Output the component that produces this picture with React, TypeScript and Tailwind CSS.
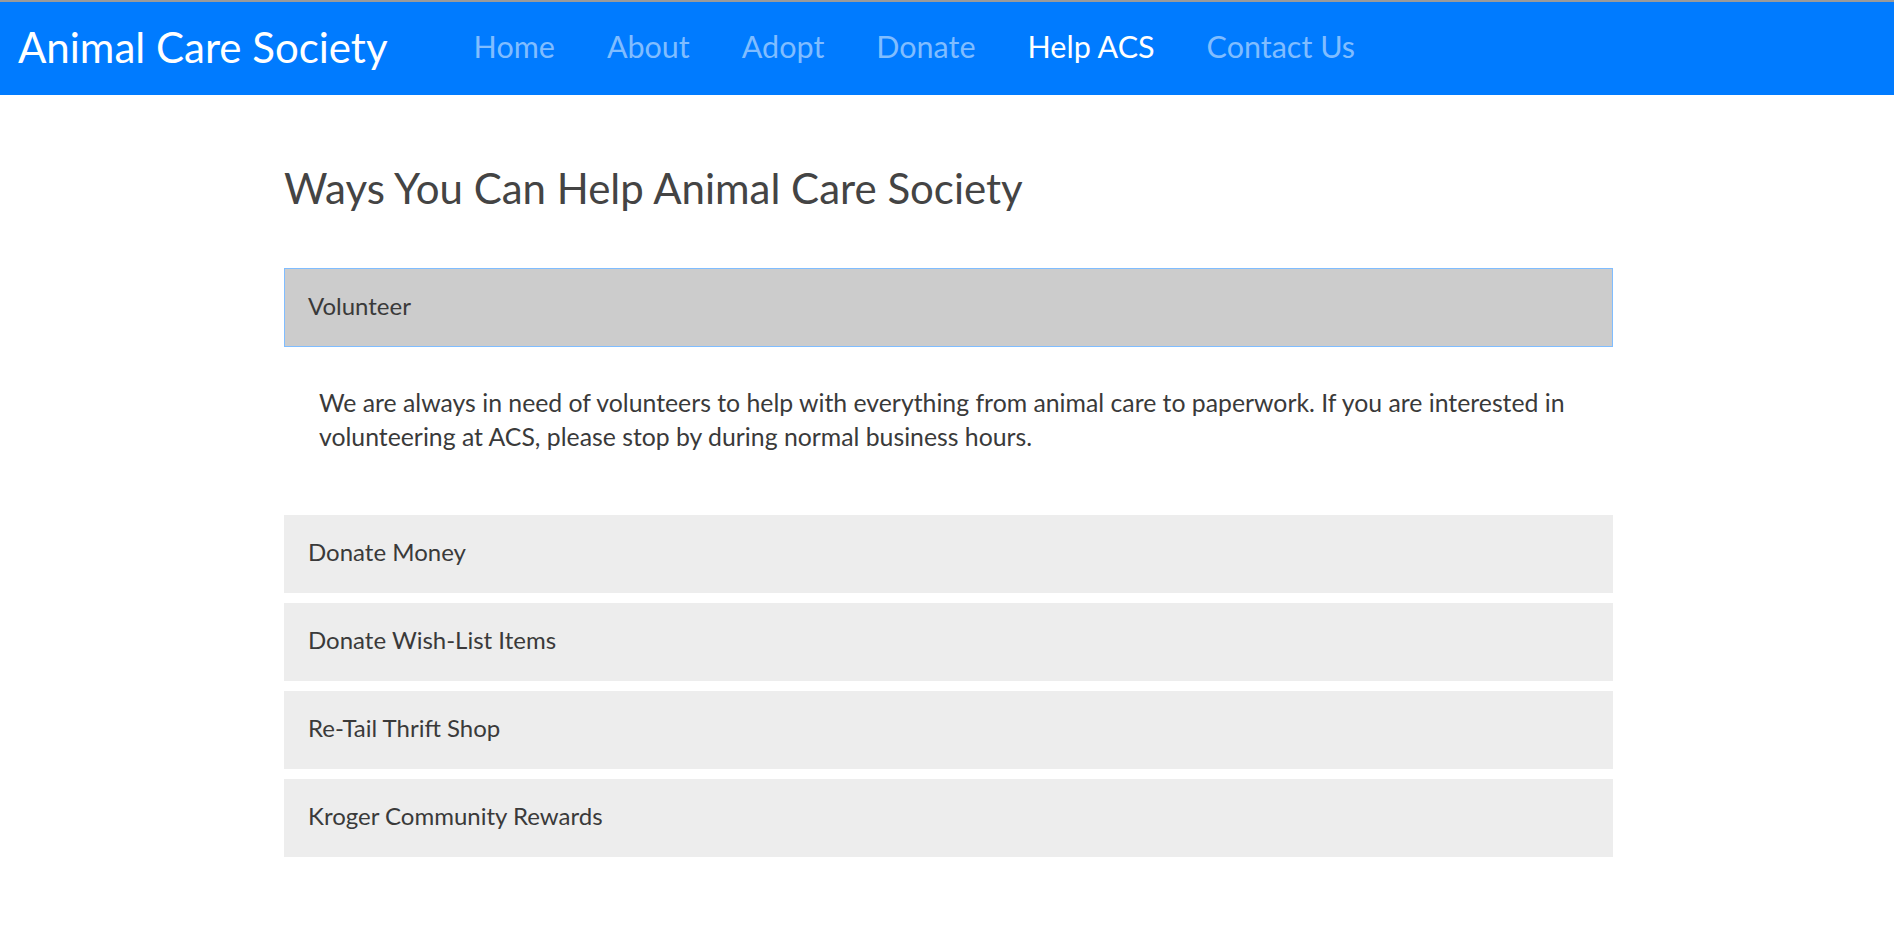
const links = ['Home', 'About', 'Adopt', 'Donate', 'Help ACS', 'Contact Us'];

const ways = ['Donate Money', 'Donate Wish-List Items', 'Re-Tail Thrift Shop', 'Kroger Community Rewards'];

export default function App() {
  return (
    <div className="min-h-screen bg-white font-['Lato',sans-serif] text-[#3a3a3a]">
      <nav className="flex h-[95px] items-center border-t-2 border-[#9a9a9a] bg-[#007bff] px-[18px] pb-[3px]">
        <span className="text-[42px] text-white">Animal Care Society</span>
        <ul className="ml-[60px] flex">
          {links.map((link) => (
            <li
              key={link}
              className={`px-[26px] text-[30.5px] ${link === 'Help ACS' ? 'text-white' : 'text-[#80bdff]'}`}
            >
              {link}
            </li>
          ))}
        </ul>
      </nav>

      <main className="ml-[284px] w-[1329px] pt-[68px]">
        <h2 className="mb-[55px] text-[42px] leading-[50px] text-[#444]">
          Ways You Can Help Animal Care Society
        </h2>

        <div className="flex h-[79px] items-center border border-[#80bdff] bg-[#cccccc] px-[23px] pb-[4px] text-[24px]">
          Volunteer
        </div>
        <div className="px-[35px] pt-[39px] pb-[61px] text-[24.8px] leading-[34px]">
          We are always in need of volunteers to help with everything from animal care to paperwork. If you are
          interested in volunteering at ACS, please stop by during normal business hours.
        </div>

        <div className="flex flex-col gap-[10px]">
          {ways.map((way) => (
            <div key={way} className="flex h-[78px] items-center bg-[#ededed] px-[24px] pb-[4px] text-[24px]">
              {way}
            </div>
          ))}
        </div>
      </main>
    </div>
  );
}
